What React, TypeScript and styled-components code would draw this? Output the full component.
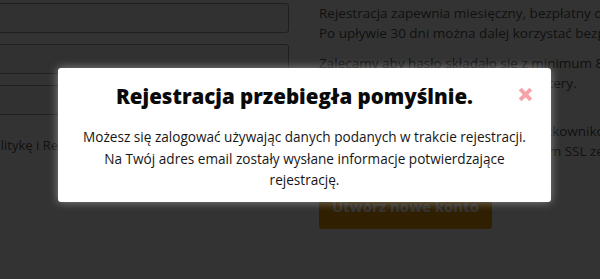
import React from "react";
import styled, { createGlobalStyle } from "styled-components";

const Global = createGlobalStyle`
  html, body { margin: 0; padding: 0; }
  body {
    width: 600px;
    height: 279px;
    overflow: hidden;
    background: #ffffff;
    font-family: "Open Sans", "Noto Sans", sans-serif;
  }
`;

const Page = styled.div`
  position: relative;
  width: 600px;
  height: 279px;
  overflow: hidden;
  background: #ffffff;
`;

const Columns = styled.div`
  display: grid;
  grid-template-columns: 289px 1fr;
  column-gap: 30px;
  padding-top: 3px;
`;

const FormCol = styled.div`
  display: flex;
  flex-direction: column;
  gap: 11px;
  margin-left: -6px;
`;

const Field = styled.div`
  height: 28px;
  border: 1px solid #9a9a9a;
  border-radius: 3px;
  background: #f4f4f4;
`;

const Consent = styled.div`
  margin-top: 10px;
  margin-left: -9px;
  font-size: 13px;
  color: #555;
  white-space: nowrap;
`;

const InfoCol = styled.div`
  display: flex;
  flex-direction: column;
  white-space: nowrap;
  overflow: hidden;
`;

const Para = styled.p<{ $gap?: number }>`
  margin: 0 0 ${(p) => p.$gap ?? 10}px 0;
  font-size: 13.5px;
  line-height: 20px;
  color: #555;
`;

const CreateButton = styled.div`
  margin-top: 22px;
  width: 173px;
  height: 46px;
  border-radius: 3px;
  background: #f39a0c;
  color: #ffffff;
  font-weight: 700;
  font-size: 15px;
  display: flex;
  align-items: center;
  justify-content: center;
`;

const BottomHeading = styled.h3`
  margin: 45px 0 0 262px;
  font-size: 22px;
  font-weight: 400;
  color: #444;
  white-space: nowrap;
`;

const Overlay = styled.div`
  position: absolute;
  inset: 0;
  background: rgba(0, 0, 0, 0.8);
  display: flex;
  align-items: flex-start;
  justify-content: center;
`;

const Modal = styled.div`
  position: relative;
  margin-top: 68px;
  margin-left: 9px;
  width: 493px;
  box-sizing: border-box;
  background: #ffffff;
  border-radius: 3px;
  box-shadow: 0 0 10px rgba(210, 210, 210, 0.55);
  padding: 15px 18px 11px;
  text-align: center;
`;

const Title = styled.h2`
  margin: 0;
  padding: 0 40px 0 20px;
  font-size: 20.5px;
  line-height: 26px;
  font-weight: 800;
  color: #0a0a0a;
  white-space: nowrap;
`;

const Close = styled.button`
  position: absolute;
  top: 16px;
  right: 16px;
  width: 20px;
  height: 20px;
  padding: 0;
  border: 0;
  background: transparent;
  display: flex;
  align-items: center;
  justify-content: center;
  cursor: pointer;
`;

const Message = styled.p`
  margin: 17px 0 0;
  font-size: 13.6px;
  line-height: 21.5px;
  font-weight: 500;
  color: #161616;
`;

export default function App() {
  return (
    <>
      <Global />
      <Page>
        <Columns>
          <FormCol>
            <Field />
            <Field />
            <Field />
            <Consent>politykę i Regulamin serwisu</Consent>
          </FormCol>
          <InfoCol>
            <Para $gap={10}>
              Rejestracja zapewnia miesięczny, bezpłatny dostęp do serwisu.
              <br />
              Po upływie 30 dni można dalej korzystać bezpłatnie z ograniczonej wersji.
            </Para>
            <Para $gap={28}>
              Zalecamy aby hasło składało się z minimum 8 znaków
              <br />
              i zawierało cyfry oraz małe i wielkie litery.
            </Para>
            <Para $gap={0}>
              Dane logowania i dane osobowe użytkowników
              <br />
              są strzeżone szyfrowanym protokołem SSL ze względów bezpieczeństwa.
            </Para>
            <CreateButton>Utwórz nowe konto</CreateButton>
          </InfoCol>
        </Columns>
        <BottomHeading>Zaloguj się przez Facebook</BottomHeading>
        <Overlay>
          <Modal>
            <Title>Rejestracja przebiegła pomyślnie.</Title>
            <Close aria-label="Zamknij">
              <svg width="17" height="17" viewBox="0 0 16 16">
                <path d="M3 3 L13 13 M13 3 L3 13" stroke="#f7a3aa" strokeWidth="3.8" strokeLinecap="butt" />
              </svg>
            </Close>
            <Message>
              Możesz się zalogować używając danych podanych w trakcie rejestracji.
              <br />
              Na Twój adres email zostały wysłane informacje potwierdzające rejestrację.
            </Message>
          </Modal>
        </Overlay>
      </Page>
    </>
  );
}
